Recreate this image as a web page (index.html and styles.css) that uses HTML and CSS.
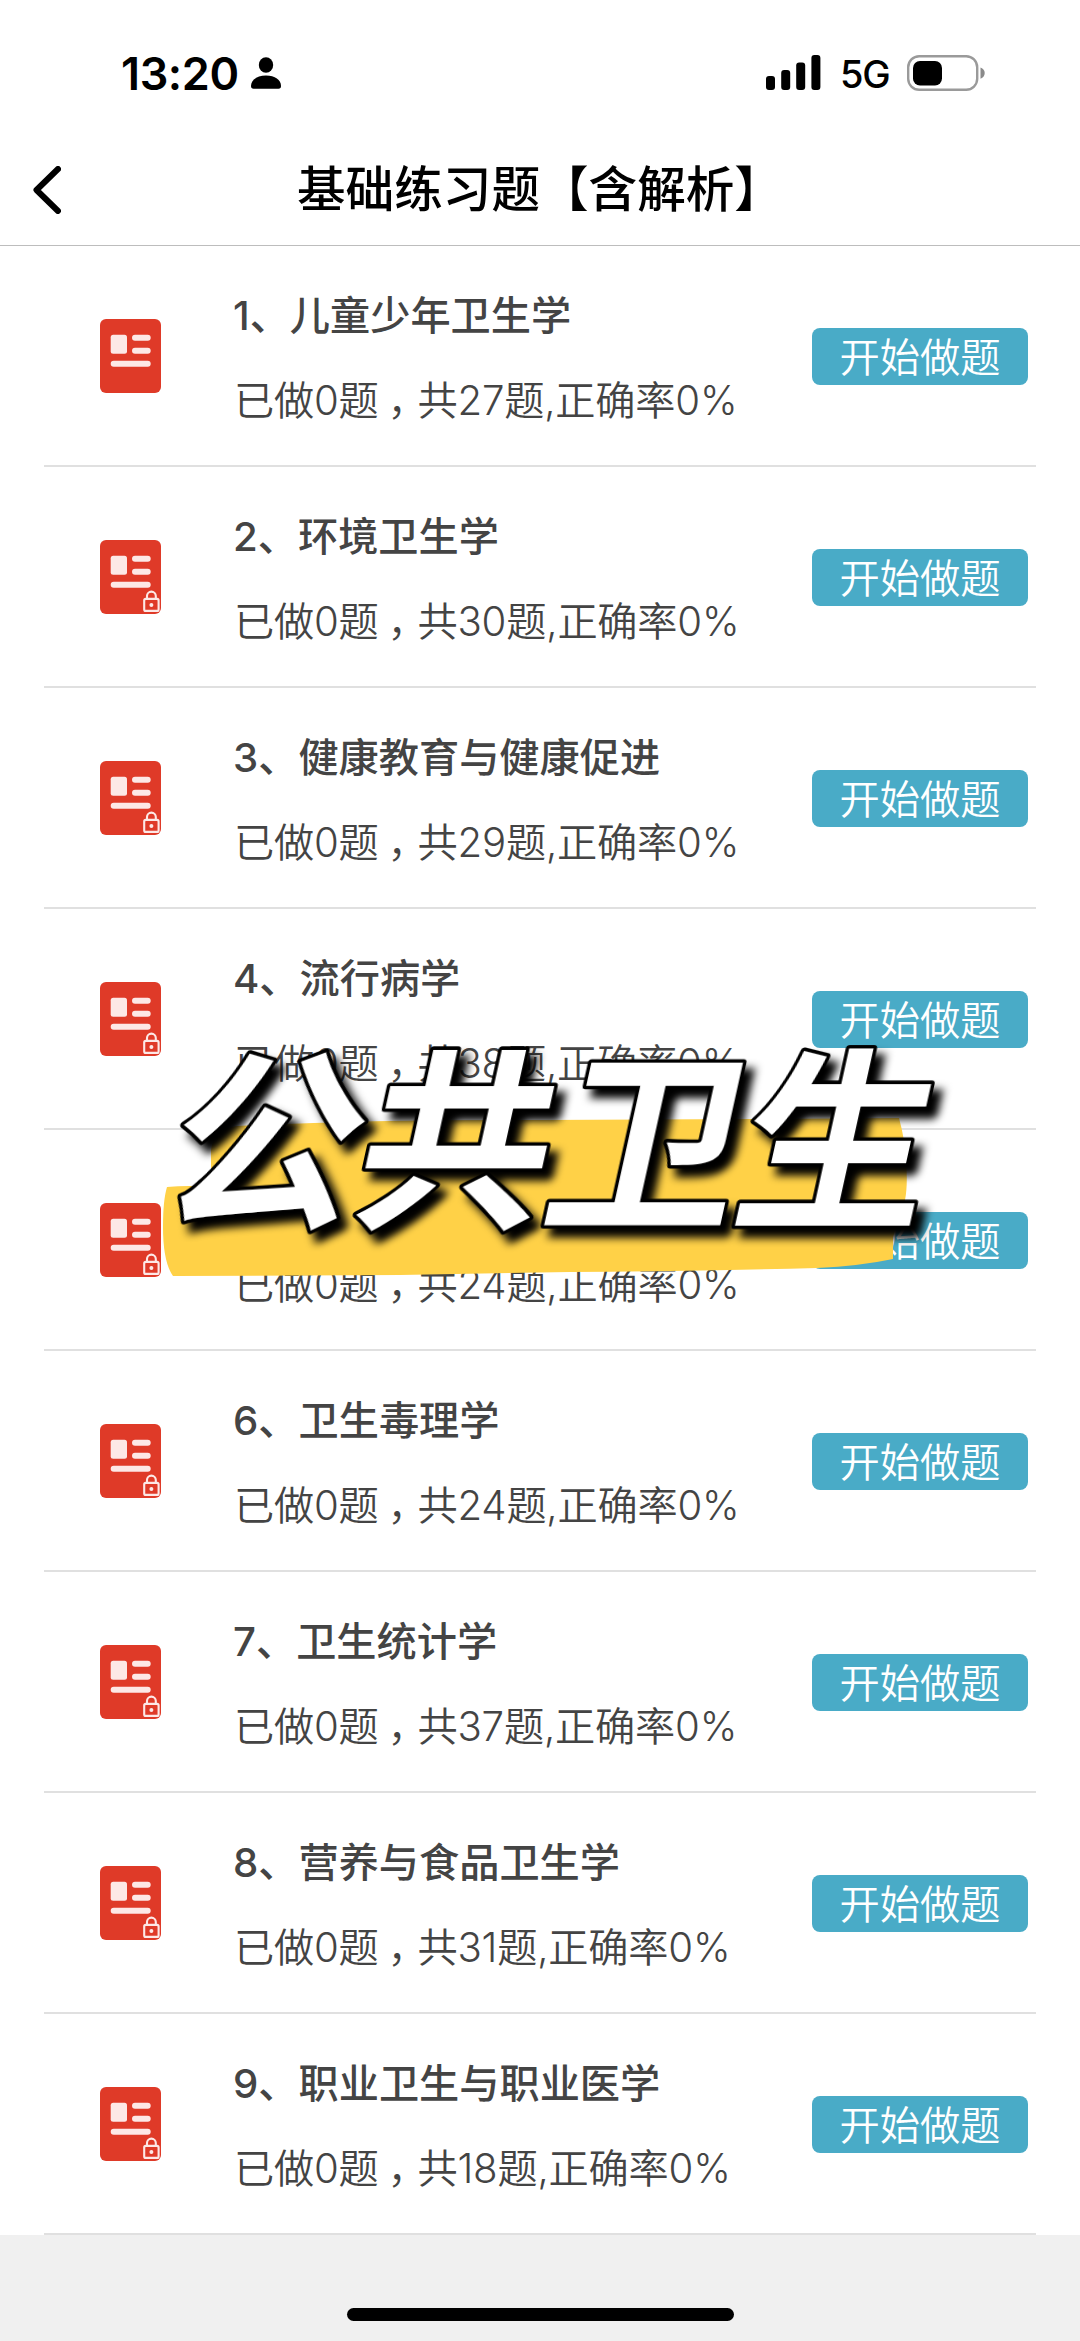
FILE: index.html
```html
<!DOCTYPE html>
<html lang="zh-CN">
<head>
<meta charset="utf-8">
<title>基础练习题【含解析】</title>
<link rel="stylesheet" href="styles.css">
</head>
<body>
<svg class="defs" aria-hidden="true">
  <symbol id="paper" viewBox="0 0 61 74">
    <rect width="61" height="74" rx="6" fill="#df3a28"/>
    <g fill="#fde8e6">
      <rect x="10.7" y="15.7" width="16.3" height="19" rx="2.5"/>
      <rect x="32" y="15.7" width="18.7" height="6" rx="3"/>
      <rect x="32" y="28.7" width="18.7" height="6" rx="3"/>
      <rect x="10.7" y="41.7" width="40" height="6" rx="3"/>
    </g>
  </symbol>
  <symbol id="lock" viewBox="0 0 61 74">
    <g fill="none" stroke="#fde8e6" stroke-width="2.1">
      <rect x="44.2" y="58.9" width="14.4" height="12" rx="1.5"/>
      <path d="M47 58.5V56a4.4 4.4 0 0 1 8.8 0v2.5"/>
    </g>
    <circle cx="51.4" cy="64.9" r="2" fill="#fde8e6"/>
  </symbol>
</svg>
<div class="screen">
  <header class="top">
    <div class="status">
      <div class="status-left">
        <span class="time">13:20</span>
        <svg class="person" viewBox="0 0 30 32"><ellipse cx="15" cy="8" rx="7.2" ry="7.8"/><path d="M0 29C0 23 6 18.5 15 18.5S30 23 30 29Q30 31.8 27.5 31.8H2.5Q0 31.8 0 29Z"/></svg>
      </div>
      <div class="status-right">
        <svg class="signal" viewBox="0 0 55 35"><rect y="21" width="9" height="14" rx="3"/><rect x="15.2" y="15" width="9" height="20" rx="3"/><rect x="30.2" y="7.5" width="9" height="27.5" rx="3"/><rect x="45.4" width="9" height="35" rx="3"/></svg>
        <span class="network">5G</span>
        <svg class="battery" viewBox="0 0 78 36"><rect x="1.2" y="1.2" width="69" height="33.6" rx="11" fill="none" stroke="#9a9a9a" stroke-width="2.4"/><rect x="6" y="6" width="29" height="24.5" rx="7"/><path d="M73.5 12.5Q77.7 14 77.7 18T73.5 23.8Z" fill="#8a8a8a"/></svg>
      </div>
    </div>
    <nav class="nav">
      <svg class="back" viewBox="0 0 28 48"><path d="M25 3L3.5 24L25 45"/></svg>
      <h1 class="heading">基础练习题【含解析】</h1>
    </nav>
  </header>
  <main class="list">
    <section class="row">
      <svg class="icon"><use href="#paper"/></svg>
      <div class="info"><h2 class="title">1、儿童少年卫生学</h2><p class="stats">已做0题<span class="comma">，</span>共27题,正确率0%</p></div>
      <button class="start">开始做题</button>
    </section>
    <section class="row">
      <svg class="icon"><use href="#paper"/><use href="#lock"/></svg>
      <div class="info"><h2 class="title">2、环境卫生学</h2><p class="stats">已做0题<span class="comma">，</span>共30题,正确率0%</p></div>
      <button class="start">开始做题</button>
    </section>
    <section class="row">
      <svg class="icon"><use href="#paper"/><use href="#lock"/></svg>
      <div class="info"><h2 class="title">3、健康教育与健康促进</h2><p class="stats">已做0题<span class="comma">，</span>共29题,正确率0%</p></div>
      <button class="start">开始做题</button>
    </section>
    <section class="row">
      <svg class="icon"><use href="#paper"/><use href="#lock"/></svg>
      <div class="info"><h2 class="title">4、流行病学</h2><p class="stats">已做0题<span class="comma">，</span>共38题,正确率0%</p></div>
      <button class="start">开始做题</button>
    </section>
    <section class="row">
      <svg class="icon"><use href="#paper"/><use href="#lock"/></svg>
      <div class="info"><h2 class="title"></h2><p class="stats">已做0题<span class="comma">，</span>共24题,正确率0%</p></div>
      <button class="start">开始做题</button>
    </section>
    <section class="row">
      <svg class="icon"><use href="#paper"/><use href="#lock"/></svg>
      <div class="info"><h2 class="title">6、卫生毒理学</h2><p class="stats">已做0题<span class="comma">，</span>共24题,正确率0%</p></div>
      <button class="start">开始做题</button>
    </section>
    <section class="row">
      <svg class="icon"><use href="#paper"/><use href="#lock"/></svg>
      <div class="info"><h2 class="title">7、卫生统计学</h2><p class="stats">已做0题<span class="comma">，</span>共37题,正确率0%</p></div>
      <button class="start">开始做题</button>
    </section>
    <section class="row">
      <svg class="icon"><use href="#paper"/><use href="#lock"/></svg>
      <div class="info"><h2 class="title">8、营养与食品卫生学</h2><p class="stats">已做0题<span class="comma">，</span>共31题,正确率0%</p></div>
      <button class="start">开始做题</button>
    </section>
    <section class="row">
      <svg class="icon"><use href="#paper"/><use href="#lock"/></svg>
      <div class="info"><h2 class="title">9、职业卫生与职业医学</h2><p class="stats">已做0题<span class="comma">，</span>共18题,正确率0%</p></div>
      <button class="start">开始做题</button>
    </section>
  </main>
  <footer class="bottom"><div class="home"></div></footer>
  <svg class="sticker" viewBox="150 930 810 460">
    <path fill="#ffd147" d="M167 1187Q189 1185 211 1187L211 1150Q213 1129 237 1126Q380 1119 540 1120L753 1119L899 1118Q905 1140 906 1160Q908 1185 905 1200L893 1237V1259Q860 1266 817 1268Q700 1271 570 1272L400 1275L173 1276Q163 1262 163 1227Q163 1200 167 1187Z"/>
    <text class="slogan" transform="translate(0 1213) skewX(-12.5)" x="157 347 538 728" y="0">公共卫生</text>
  </svg>
</div>
</body>
</html>
```
FILE: styles.css
```css
* { box-sizing: border-box; }

body {
  margin: 0;
  background: #fff;
  font-family: Inter, "Noto Sans CJK SC", sans-serif;
  color: #444;
}

h1, h2, p { margin: 0; }

.defs { display: none; }

.screen {
  position: relative;
  width: 1080px;
  height: 2341px;
  display: flex;
  flex-direction: column;
}

.top {
  height: 246px;
  border-bottom: 1px solid #bdbdbd;
  color: #000;
}

.status {
  height: 145px;
  padding: 0 95px 0 121px;
  display: flex;
  justify-content: space-between;
  align-items: center;
}

.status-left, .status-right { display: flex; align-items: center; }

.time {
  width: 130px;
  font-size: 45px;
  font-weight: 600;
  line-height: 60px;
  letter-spacing: -0.4px;
  padding-top: 2px;
}

.person { width: 30px; height: 32px; }
.signal { width: 55px; height: 35px; margin-right: 19px; }

.network {
  width: 67px;
  font-size: 38px;
  font-weight: 450;
  line-height: 50px;
  padding-top: 3px;
  letter-spacing: -1.2px;
}

.battery { width: 78px; height: 36px; }

.nav {
  height: 88px;
  display: grid;
  grid-template-columns: 1fr auto 1fr;
  align-items: center;
  padding: 1px 33px 0;
}

.back {
  width: 28px;
  height: 48px;
  fill: none;
  stroke: #000;
  stroke-width: 6;
  stroke-linecap: round;
  stroke-linejoin: round;
}

.heading {
  font-size: 48.6px;
  font-weight: 500;
  line-height: 72px;
}

.list { padding: 0 44px; }

.row {
  height: 221px;
  border-bottom: 2px solid #e0e0e0;
  display: flex;
  align-items: center;
  padding: 1px 8px 0 56px;
}

.icon { width: 61px; height: 74px; flex: none; }

.info { flex: 1; padding: 4px 0 0 72px; white-space: nowrap; }

.title {
  height: 60px;
  font-size: 40.2px;
  font-weight: 500;
  line-height: 60px;
}

.stats {
  margin-top: 25px;
  padding-left: 1px;
  font-size: 40.2px;
  font-weight: 350;
  line-height: 60px;
  letter-spacing: -0.2px;
}

/* Half-width comma glyph centred in a full-width cell */
.comma {
  font-feature-settings: "halt";
  padding-left: 9px;
  margin-right: 10px;
}

.start {
  width: 216px;
  height: 57px;
  border: 0;
  border-radius: 8px;
  padding: 0 0 4px;
  background: #49abc7;
  color: #fff;
  font: 350 40.3px/53px "Noto Sans CJK SC", sans-serif;
}

.bottom {
  flex: 1;
  background: #f0f0f0;
  display: flex;
  justify-content: center;
  align-items: flex-end;
  padding-bottom: 20px;
}

.home { width: 387px; height: 13px; border-radius: 7px; background: #000; }

.sticker {
  position: absolute;
  left: 150px;
  top: 930px;
  width: 810px;
  height: 460px;
  overflow: visible;
}

.slogan {
  font-family: "Noto Sans CJK SC", sans-serif;
  font-size: 193px;
  font-weight: 700;
  fill: #fff;
  stroke: #000;
  stroke-width: 7px;
  stroke-linejoin: round;
  paint-order: stroke;
  filter: drop-shadow(10px 9px 4px #000);
}
```
